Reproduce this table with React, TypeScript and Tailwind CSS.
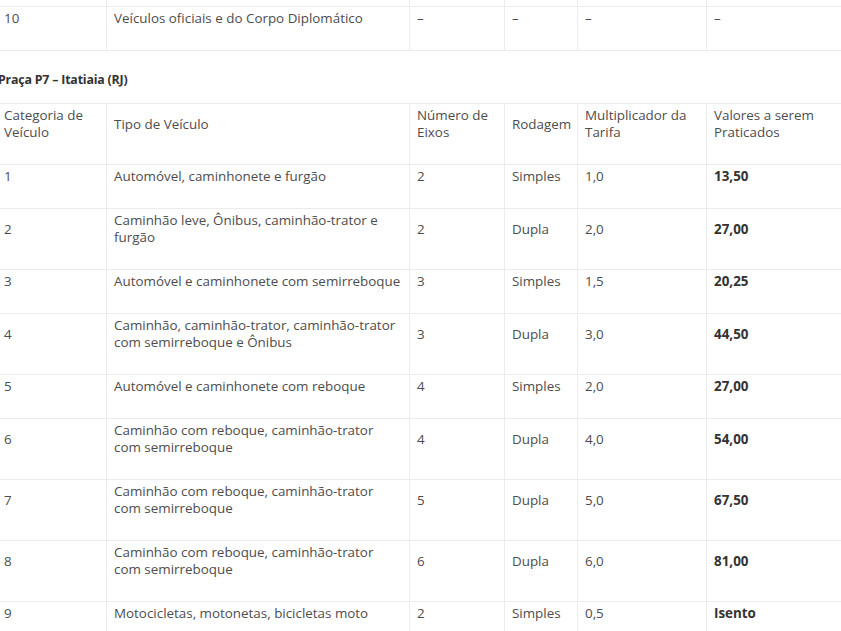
import React from "react";

type Row = {
  cat: string;
  tipo: string[];
  eixos: string;
  rodagem: string;
  mult: string;
  valor: string;
};

// line breaks follow the original page
const rows: Row[] = [
  { cat: "1", tipo: ["Automóvel, caminhonete e furgão"], eixos: "2", rodagem: "Simples", mult: "1,0", valor: "13,50" },
  { cat: "2", tipo: ["Caminhão leve, Ônibus, caminhão-trator e", "furgão"], eixos: "2", rodagem: "Dupla", mult: "2,0", valor: "27,00" },
  { cat: "3", tipo: ["Automóvel e caminhonete com semirreboque"], eixos: "3", rodagem: "Simples", mult: "1,5", valor: "20,25" },
  { cat: "4", tipo: ["Caminhão, caminhão-trator, caminhão-trator", "com semirreboque e Ônibus"], eixos: "3", rodagem: "Dupla", mult: "3,0", valor: "44,50" },
  { cat: "5", tipo: ["Automóvel e caminhonete com reboque"], eixos: "4", rodagem: "Simples", mult: "2,0", valor: "27,00" },
  { cat: "6", tipo: ["Caminhão com reboque, caminhão-trator", "com semirreboque"], eixos: "4", rodagem: "Dupla", mult: "4,0", valor: "54,00" },
  { cat: "7", tipo: ["Caminhão com reboque, caminhão-trator", "com semirreboque"], eixos: "5", rodagem: "Dupla", mult: "5,0", valor: "67,50" },
  { cat: "8", tipo: ["Caminhão com reboque, caminhão-trator", "com semirreboque"], eixos: "6", rodagem: "Dupla", mult: "6,0", valor: "81,00" },
  { cat: "9", tipo: ["Motocicletas, motonetas, bicicletas moto"], eixos: "2", rodagem: "Simples", mult: "0,5", valor: "Isento" },
];

const td = "border border-[#ececec] pl-[7px] pr-[4px] pt-[3px] pb-[23px] align-middle leading-[17px] whitespace-nowrap overflow-hidden";

function Cols() {
  return (
    <colgroup>
      <col className="w-[110px]" />
      <col className="w-[303px]" />
      <col className="w-[95px]" />
      <col className="w-[73px]" />
      <col className="w-[129px]" />
      <col className="w-[160px]" />
    </colgroup>
  );
}

function Lines({ items }: { items: string[] }) {
  return (
    <>
      {items.map((l, i) => (
        <span key={i} className="block">
          {l}
        </span>
      ))}
    </>
  );
}

export default function App() {
  return (
    <div
      className="h-[631px] w-[841px] overflow-hidden bg-white text-[13.4px] text-[#4d4d4d]"
      style={{ fontFamily: '"Open Sans", "Liberation Sans", sans-serif' }}
    >
      <div className="-ml-[4px] w-[874px]">
        {/* tail of the previous table */}
        <div className="-mt-[38px]">
          <table className="w-[870px] table-fixed border-collapse">
            <Cols />
            <tbody>
              <tr>
                <td className={td}>9</td>
                <td className={td}>Motocicletas, motonetas, bicicletas moto</td>
                <td className={td}>2</td>
                <td className={td}>Simples</td>
                <td className={td}>0,5</td>
                <td className={`${td} font-bold text-[#333]`}>Isento</td>
              </tr>
              <tr>
                <td className={td}>10</td>
                <td className={td}>Veículos oficiais e do Corpo Diplomático</td>
                <td className={td}>–</td>
                <td className={td}>–</td>
                <td className={td}>–</td>
                <td className={td}>–</td>
              </tr>
            </tbody>
          </table>
        </div>

        <p className="ml-[2px] mt-[20px] mb-[15px] text-[12.4px] font-bold leading-[17px] tracking-[-0.2px] text-[#333]">
          Praça P7 – Itatiaia (RJ)
        </p>

        <table className="w-[870px] table-fixed border-collapse">
          <Cols />
          <thead>
            <tr className="text-left">
              <th className={`${td} font-normal`}>
                <Lines items={["Categoria de", "Veículo"]} />
              </th>
              <th className={`${td} font-normal`}>Tipo de Veículo</th>
              <th className={`${td} font-normal`}>
                <Lines items={["Número de", "Eixos"]} />
              </th>
              <th className={`${td} font-normal`}>Rodagem</th>
              <th className={`${td} font-normal`}>
                <Lines items={["Multiplicador da", "Tarifa"]} />
              </th>
              <th className={`${td} font-normal`}>
                <Lines items={["Valores a serem", "Praticados"]} />
              </th>
            </tr>
          </thead>
          <tbody>
            {rows.map((r) => (
              <tr key={r.cat}>
                <td className={td}>{r.cat}</td>
                <td className={td}>
                  <Lines items={r.tipo} />
                </td>
                <td className={td}>{r.eixos}</td>
                <td className={td}>{r.rodagem}</td>
                <td className={td}>{r.mult}</td>
                <td className={`${td} font-bold text-[#333]`}>{r.valor}</td>
              </tr>
            ))}
          </tbody>
        </table>
      </div>
    </div>
  );
}
